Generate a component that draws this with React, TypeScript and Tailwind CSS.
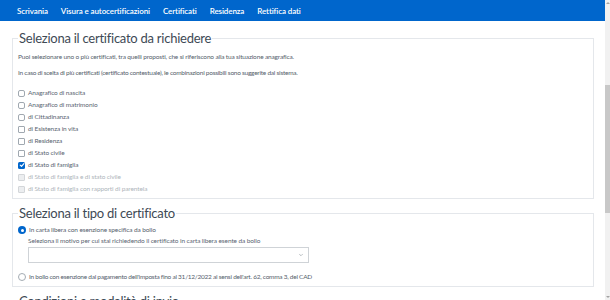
import { ChevronDown } from 'lucide-react';

const navItems = ['Scrivania', 'Visura e autocertificazioni', 'Certificati', 'Residenza', 'Rettifica dati'];

const certificati = [
  { label: 'Anagrafico di nascita', round: true },
  { label: 'Anagrafico di matrimonio', round: true },
  { label: 'di Cittadinanza', round: true },
  { label: 'di Esistenza in vita' },
  { label: 'di Residenza' },
  { label: 'di Stato civile' },
  { label: 'di Stato di famiglia', checked: true },
  { label: 'di Stato di famiglia e di stato civile', disabled: true },
  { label: 'di Stato di famiglia con rapporti di parentela', disabled: true },
];

function Checkbox({ checked, disabled, round }: { checked?: boolean; disabled?: boolean; round?: boolean }) {
  if (checked) {
    return (
      <span className="w-[7px] h-[7px] rounded-[1.5px] bg-[#0066cc] flex items-center justify-center shrink-0">
        <svg width="6" height="6" viewBox="0 0 10 10" fill="none">
          <path d="M2 5.2 L4.2 7.4 L8.2 2.8" stroke="white" strokeWidth="1.8" strokeLinecap="round" strokeLinejoin="round" />
        </svg>
      </span>
    );
  }
  return (
    <span
      className={
        'w-[7px] h-[7px] border shrink-0 ' +
        (round ? 'rounded-[2px] ' : 'rounded-[1px] ') +
        (disabled ? 'border-[#d3d6d9] bg-[#eceef0]' : 'border-[#a0a8b0] bg-white')
      }
    />
  );
}

export default function App() {
  return (
    <div className="w-[610px] h-[300px] overflow-hidden flex bg-white" style={{ fontFamily: 'Lato, "Noto Sans", sans-serif' }}>
      <div className="flex-1 flex flex-col">
        {/* Nav */}
        <nav className="h-[21px] bg-[#0066cc] flex items-center gap-[13px] pl-[17px] shrink-0">
          {navItems.map(item => (
            <span key={item} className="text-white text-[8px] font-semibold tracking-[-0.1px]">{item}</span>
          ))}
        </nav>

        {/* Certificati */}
        <fieldset className="mt-[8px] ml-[12px] mr-[11px] border border-[#e4e7eb] px-[5px] pb-[3px]">
          <legend className="px-[1px] text-[13px] leading-[18px] text-[#3e4a55] tracking-[-0.25px]">Seleziona il certificato da richiedere</legend>
          <p className="mt-[4px] text-[6.5px] leading-[12px] text-[#55616c] tracking-[-0.15px]">
            Puoi selezionare uno o più certificati, tra quelli proposti, che si riferiscono alla tua situazione anagrafica.
          </p>
          <p className="mt-[4px] text-[6.5px] leading-[12px] text-[#55616c] tracking-[-0.25px]">
            In caso di scelta di più certificati (certificato contestuale), le combinazioni possibili sono suggerite dal sistema.
          </p>
          <div className="mt-[8px] flex flex-col">
            {certificati.map(c => (
              <label key={c.label} className="h-[12px] flex items-center gap-[3px]">
                <Checkbox checked={c.checked} disabled={c.disabled} round={c.round} />
                <span className={'text-[6.5px] tracking-[-0.1px] ' + (c.disabled ? 'text-[#aeb5bb]' : 'text-[#5a6672]')}>{c.label}</span>
              </label>
            ))}
          </div>
        </fieldset>

        {/* Tipo di certificato */}
        <fieldset className="mt-[5px] ml-[12px] mr-[11px] border border-[#e4e7eb] px-[5px] pb-[3px]">
          <legend className="px-[1px] text-[13px] leading-[18px] text-[#3e4a55] tracking-[-0.25px]">Seleziona il tipo di certificato</legend>
          <label className="mt-[2px] h-[12px] flex items-center gap-[3px]">
            <span className="w-[8px] h-[8px] rounded-full bg-[#0066cc] flex items-center justify-center shrink-0">
              <span className="w-[3px] h-[3px] rounded-full bg-white" />
            </span>
            <span className="text-[6.5px] text-[#55616c] tracking-[-0.1px]">In carta libera con esenzione specifica da bollo</span>
          </label>
          <div className="pl-[10px]">
            <div className="h-[10px] flex items-center text-[6.5px] text-[#5a6672] tracking-[-0.1px]">
              Seleziona il motivo per cui stai richiedendo il certificato in carta libera esente da bollo
            </div>
            <div className="mt-[1px] w-[281px] h-[16px] border border-[#cfd3d7] bg-white flex items-center justify-end pr-[4px]">
              <ChevronDown size={6} strokeWidth={2} className="text-[#7a848d]" />
            </div>
          </div>
          <label className="mt-[8px] h-[12px] flex items-center gap-[3px]">
            <span className="w-[8px] h-[8px] rounded-full border border-[#a4acb3] bg-white shrink-0" />
            <span className="text-[6.5px] text-[#55616c] tracking-[-0.25px]">
              In bollo con esenzione dal pagamento dell'imposta fino al 31/12/2022 ai sensi dell'art. 62, comma 3, del CAD
            </span>
          </label>
        </fieldset>

        {/* Condizioni */}
        <fieldset className="mt-[5px] ml-[12px] mr-[11px] border border-[#e4e7eb] px-[5px] pb-[3px]">
          <legend className="px-[1px] text-[13px] leading-[18px] text-[#3e4a55] tracking-[-0.25px]">Condizioni e modalità di invio</legend>
          <div className="h-[40px]" />
        </fieldset>
      </div>

      {/* Scrollbar */}
      <div className="w-[5px] bg-[#f1f1f1] flex flex-col items-center shrink-0">
        <div className="h-[6px] flex items-center justify-center">
          <span className="w-0 h-0 border-l-[2px] border-r-[2px] border-b-[2px] border-l-transparent border-r-transparent border-b-[#a3a3a3]" />
        </div>
        <div className="mt-[79px] w-[5px] h-[128px] bg-[#c8c8c8]" />
        <div className="flex-1" />
        <div className="h-[6px] flex items-center justify-center">
          <span className="w-0 h-0 border-l-[2px] border-r-[2px] border-t-[2px] border-l-transparent border-r-transparent border-t-[#a3a3a3]" />
        </div>
      </div>
    </div>
  );
}
